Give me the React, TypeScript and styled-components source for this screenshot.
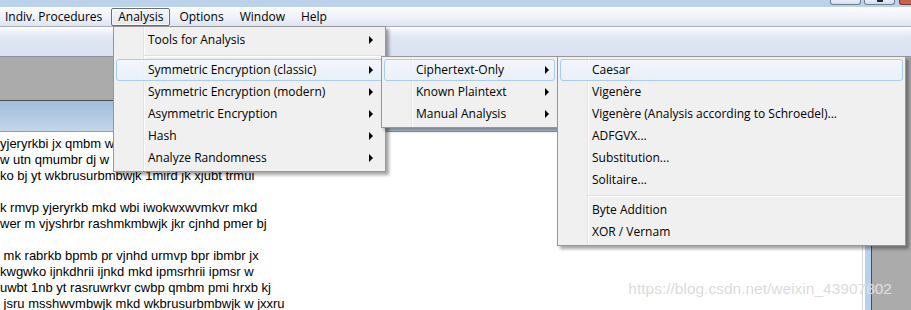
import React from "react";
import styled, { createGlobalStyle } from "styled-components";

type MenuEntry = { label?: string; arrow?: boolean; active?: boolean; separator?: boolean };

const analysisMenu: MenuEntry[] = [
  { label: "Tools for Analysis", arrow: true },
  { separator: true },
  { label: "Symmetric Encryption (classic)", arrow: true, active: true },
  { label: "Symmetric Encryption (modern)", arrow: true },
  { label: "Asymmetric Encryption", arrow: true },
  { label: "Hash", arrow: true },
  { label: "Analyze Randomness", arrow: true },
];

const classicMenu: MenuEntry[] = [
  { label: "Ciphertext-Only", arrow: true, active: true },
  { label: "Known Plaintext", arrow: true },
  { label: "Manual Analysis", arrow: true },
];

const ciphertextMenu: MenuEntry[] = [
  { label: "Caesar", active: true },
  { label: "Vigenère" },
  { label: "Vigenère (Analysis according to Schroedel)..." },
  { label: "ADFGVX..." },
  { label: "Substitution..." },
  { label: "Solitaire..." },
  { separator: true },
  { label: "Byte Addition" },
  { label: "XOR / Vernam" },
];

const textLines = [
  "yjeryrkbi jx qmbm wil",
  "w utn qmumbr dj w ij",
  "ko bj yt wkbrusurbmbwjk 1mird jk xjubt trmui",
  "",
  "k rmvp yjeryrkb mkd wbi iwokwxwvmkvr mkd",
  "wer m vjyshrbr rashmkmbwjk jkr cjnhd pmer bj",
  "",
  " mk rabrkb bpmb pr vjnhd urmvp bpr ibmbr jx",
  "kwgwko ijnkdhrii ijnkd mkd ipmsrhrii ipmsr w",
  "uwbt 1nb yt rasruwrkvr cwbp qmbm pmi hrxb kj",
  " jsru msshwvmbwjk mkd wkbrusurbmbwjk w jxxru",
];

const topMenus = ["Indiv. Procedures", "Analysis", "Options", "Window", "Help"];

const Menu: React.FC<{ entries: MenuEntry[]; left: number; top: number; width: number; arrowPad: number }> = ({
  entries,
  left,
  top,
  width,
  arrowPad,
}) => (
  <MenuPanel $left={left} $top={top} $width={width}>
    {entries.map((e, i) =>
      e.separator ? (
        <Separator key={i} />
      ) : (
        <Item key={i} $active={e.active} $pad={arrowPad}>
          <span>{e.label}</span>
          {e.arrow && <Arrow />}
        </Item>
      )
    )}
  </MenuPanel>
);

export default function App() {
  return (
    <Root>
      <GlobalStyle />
      <TitleStrip>
        <CaptionButton />
        <CaptionButton>
          <RestoreMark />
        </CaptionButton>
        <CloseButton />
      </TitleStrip>
      <MenuBar>
        {topMenus.map((m) => (
          <MenuBarItem key={m} $open={m === "Analysis"}>
            {m}
          </MenuBarItem>
        ))}
      </MenuBar>
      <Toolbar />
      <Workspace>
        <ChildWindow>
          <ChildTitle />
          <ChildBody>
            <TextArea>
              {textLines.map((l, i) => (
                <TextLine key={i}>{l}</TextLine>
              ))}
            </TextArea>
            <FrameSide />
          </ChildBody>
        </ChildWindow>
      </Workspace>

      <Menu entries={analysisMenu} left={113} top={26} width={273} arrowPad={9} />
      <Menu entries={classicMenu} left={381} top={56} width={177} arrowPad={5} />
      <Menu entries={ciphertextMenu} left={557} top={56} width={349} arrowPad={8} />

      <Watermark>https://blog.csdn.net/weixin_43907802</Watermark>
    </Root>
  );
}

const GlobalStyle = createGlobalStyle`
  html, body {
    margin: 0;
    padding: 0;
    background: #fff;
    overflow: hidden;
  }
`;

const Root = styled.div`
  position: relative;
  width: 911px;
  height: 310px;
  overflow: hidden;
  display: flex;
  flex-direction: column;
  font-family: "Open Sans", "Noto Sans", sans-serif;
  font-size: 12px;
  color: #000;
`;

const TitleStrip = styled.div`
  height: 7px;
  flex-shrink: 0;
  background: #bcd2ea;
  display: flex;
  justify-content: flex-end;
  align-items: flex-start;
  gap: 3px;
`;

const CaptionButton = styled.div`
  width: 29px;
  height: 4px;
  border: 1px solid #6f7f93;
  border-top: none;
  border-radius: 0 0 3px 3px;
  background: linear-gradient(#e6edf6, #d3deec);
  display: flex;
  justify-content: center;
`;

const RestoreMark = styled.div`
  width: 6px;
  height: 2px;
  background: #2a2a2a;
`;

const CloseButton = styled.div`
  width: 11px;
  height: 4px;
  margin-left: 1px;
  border: 1px solid #6b3a30;
  border-top: none;
  border-right: none;
  border-radius: 0 0 0 3px;
  background: #c9614c;
`;

const MenuBar = styled.div`
  height: 19px;
  flex-shrink: 0;
  border-bottom: 1px solid #a9b0bb;
  background: linear-gradient(#fbfcfe, #eef1f8 55%, #dde4f2);
  display: flex;
  align-items: flex-start;
  gap: 2px;
`;

const MenuBarItem = styled.div<{ $open?: boolean }>`
  height: 16px;
  margin-top: 1px;
  padding: 0 6px;
  display: flex;
  align-items: center;
  line-height: 16px;
  border: 1px solid ${(p) => (p.$open ? "#6a6e75" : "transparent")};
  border-radius: 2px;
  background: ${(p) => (p.$open ? "linear-gradient(#f3f5f8, #e3e8ef)" : "transparent")};
  box-shadow: ${(p) => (p.$open ? "inset 0 0 0 1px rgba(255,255,255,0.6)" : "none")};

  &:first-child {
    padding-left: 4px;
  }
`;

const Toolbar = styled.div`
  height: 29px;
  flex-shrink: 0;
  border-bottom: 1px solid #8d9096;
  background: linear-gradient(#ffffff 0, #f4f6fb 10%, #e0e6f3 35%, #dae1f1 100%);
`;

const Workspace = styled.div`
  flex: 1;
  background: #ababab;
  display: flex;
  flex-direction: column;
  padding-top: 43px;
`;

const ChildWindow = styled.div`
  width: 871px;
  flex: 1;
  display: flex;
  flex-direction: column;
  border-top: 1px solid #4e4e4e;
  border-right: 1px solid #4e4e4e;
`;

const ChildTitle = styled.div`
  height: 30px;
  flex-shrink: 0;
  background: linear-gradient(#a1bddc, #c3d6ea);
  border-bottom: 1px solid #8a9fb8;
`;

const ChildBody = styled.div`
  flex: 1;
  display: flex;
`;

const TextArea = styled.div`
  flex: 1;
  background: #fff;
  border-right: 1px solid #d6d6d6;
  padding-top: 4px;
  font-family: "Liberation Sans", Arial, sans-serif;
  font-size: 13px;
  line-height: 16px;
  color: #000;
`;

const TextLine = styled.div`
  height: 16px;
  white-space: pre;
`;

const FrameSide = styled.div`
  width: 6px;
  border-left: 2px solid #fff;
  background: #b8d2ee;
`;

const MenuPanel = styled.div<{ $left: number; $top: number; $width: number }>`
  position: absolute;
  left: ${(p) => p.$left}px;
  top: ${(p) => p.$top}px;
  width: ${(p) => p.$width}px;
  box-sizing: border-box;
  padding: 2px 0;
  border: 1px solid #979797;
  background: linear-gradient(
      to right,
      transparent 29px,
      #e2e3e3 29px,
      #e2e3e3 30px,
      #ffffff 30px,
      #ffffff 31px,
      transparent 31px
    ),
    #f0f0f0;
  box-shadow: 3px 3px 3px rgba(0, 0, 0, 0.35);
`;

const Item = styled.div<{ $active?: boolean; $pad: number }>`
  height: 22px;
  box-sizing: border-box;
  margin: 0 2px;
  padding: 0 ${(p) => p.$pad}px 1px 31px;
  display: flex;
  align-items: center;
  white-space: nowrap;
  border: 1px solid ${(p) => (p.$active ? "#aaccf1" : "transparent")};
  border-radius: 3px;
  background: ${(p) =>
    p.$active ? "linear-gradient(rgba(243,247,253,0.85), rgba(232,240,250,0.85))" : "transparent"};
`;

const Arrow = styled.span`
  margin-left: auto;
  width: 0;
  height: 0;
  border-left: 4px solid #000;
  border-top: 4px solid transparent;
  border-bottom: 4px solid transparent;
`;

const Separator = styled.div`
  height: 8px;
  margin: 0 2px 0 30px;
  background: linear-gradient(
    transparent 4px,
    #e0e0e0 4px,
    #e0e0e0 5px,
    #ffffff 5px,
    #ffffff 6px,
    transparent 6px
  );
`;

const Watermark = styled.div`
  position: absolute;
  right: 19px;
  top: 280px;
  font-family: "Liberation Sans", Arial, sans-serif;
  font-size: 15.5px;
  color: rgba(215, 215, 215, 0.9);
  text-shadow: 0 0 1px rgba(255, 255, 255, 0.6);
  white-space: nowrap;
`;
